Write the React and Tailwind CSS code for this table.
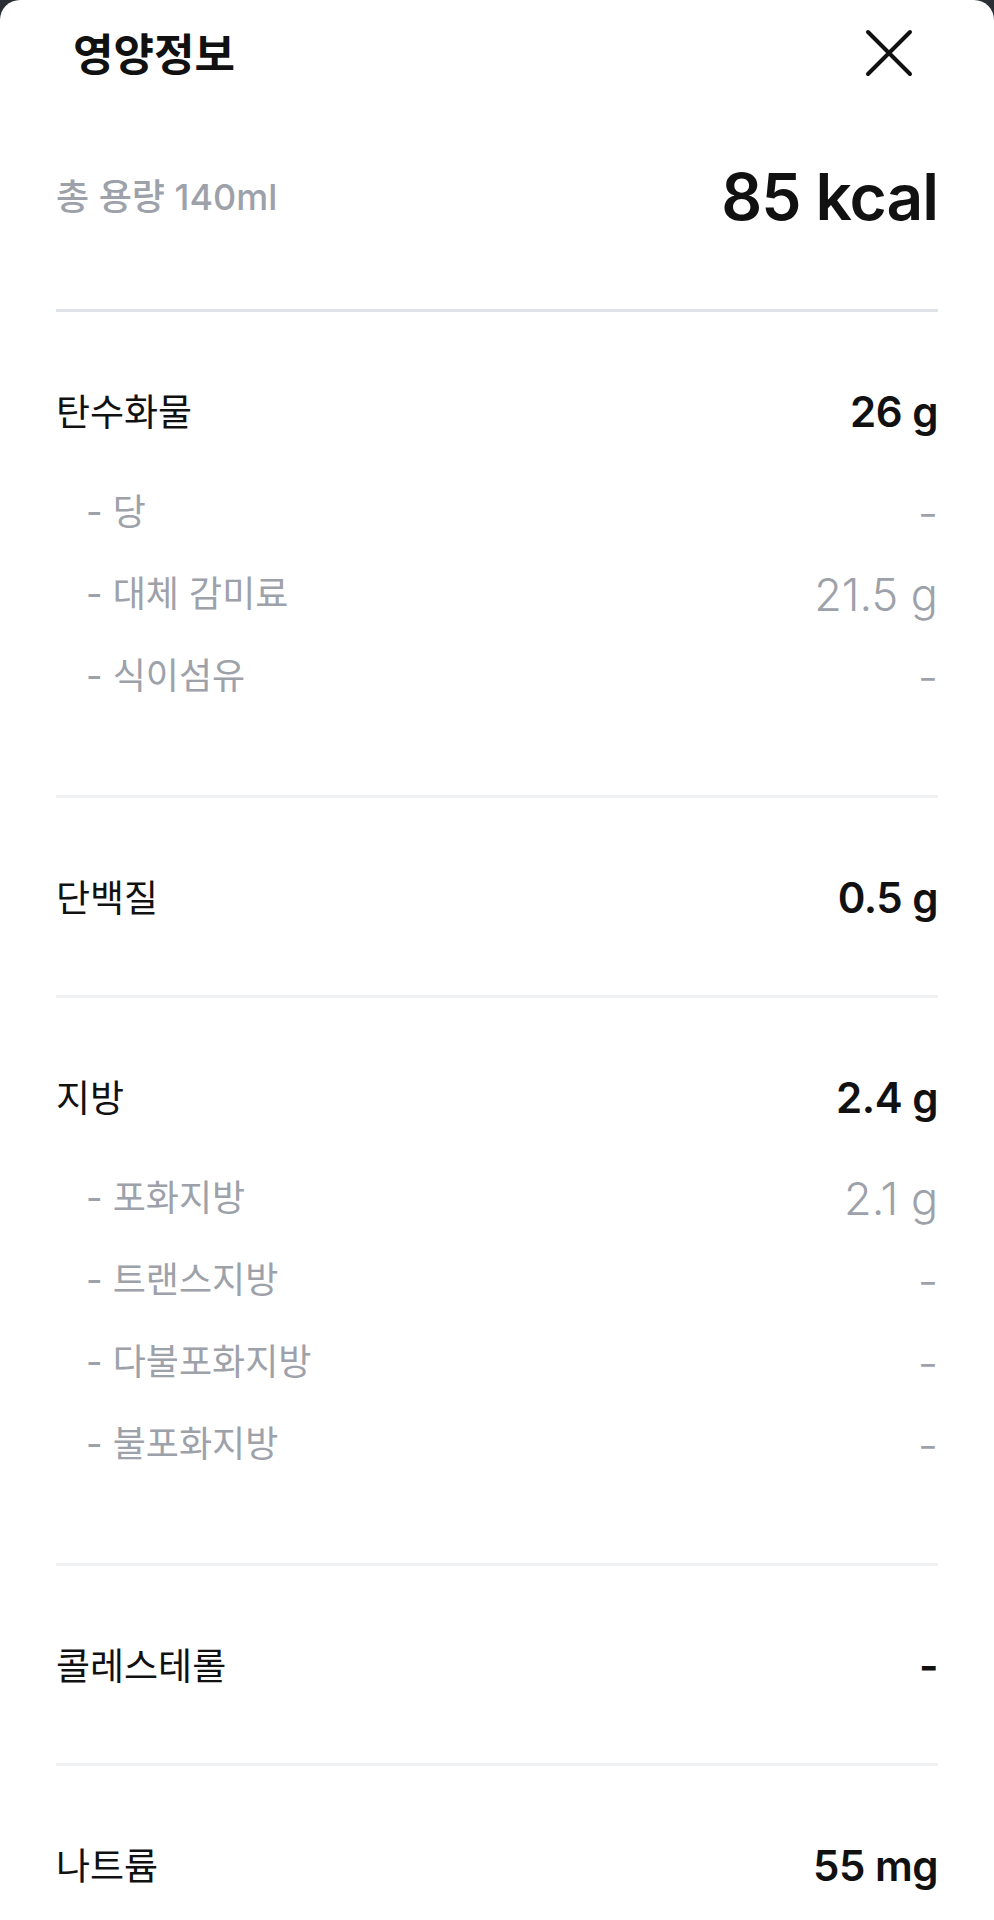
import React from 'react';

const FONT = { fontFamily: 'Inter, "Noto Sans CJK KR", "Noto Sans", sans-serif' };

const sections = [
    {
        label: '탄수화물',
        value: '26 g',
        subs: [
            { label: '당', value: '-' },
            { label: '대체 감미료', value: '21.5 g' },
            { label: '식이섬유', value: '-' },
        ],
    },
    { label: '단백질', value: '0.5 g' },
    {
        label: '지방',
        value: '2.4 g',
        subs: [
            { label: '포화지방', value: '2.1 g' },
            { label: '트랜스지방', value: '-' },
            { label: '다불포화지방', value: '-' },
            { label: '불포화지방', value: '-' },
        ],
    },
    { label: '콜레스테롤', value: '-' },
    { label: '나트륨', value: '55 mg' },
];

function Section({ label, value, subs }) {
    return (
        <div className={`pt-[76px] ${subs ? 'pb-[78px]' : 'pb-[73px]'}`}>
            <div className="flex h-12 items-center justify-between">
                <span className="text-[37px] leading-none text-[#111]">{label}</span>
                <span className="text-[42px] font-semibold leading-none tracking-[-0.5px] text-[#111]">{value}</span>
            </div>
            {subs && (
                <div className="mt-[35px]">
                    {subs.map((s) => (
                        <div key={s.label} className="flex h-[82px] items-center justify-between pl-[30px]">
                            <span className="text-[36px] leading-none text-[#9da1a9]">- {s.label}</span>
                            <span className="text-[45px] font-light leading-none text-[#9da1a9]">{s.value}</span>
                        </div>
                    ))}
                </div>
            )}
        </div>
    );
}

export default function App() {
    return (
        <div className="w-[994px] h-[1920px] overflow-hidden bg-[#2a2e35]" style={FONT}>
            <div className="h-full rounded-t-[20px] bg-white">
                {/* Header */}
                <div className="flex h-14 items-center justify-between pt-[27px] box-content pl-[73px] pr-[81px]">
                    <h1 className="text-[44px] font-bold leading-none text-[#111]">영양정보</h1>
                    <button className="-mt-1">
                        <svg width="48" height="48" viewBox="0 0 48 48" fill="none" stroke="#111" strokeWidth="4" strokeLinecap="round">
                            <path d="M3 3L45 45M45 3L3 45" />
                        </svg>
                    </button>
                </div>

                <div className="px-14">
                    {/* Total */}
                    <div className="mt-[82px] flex h-16 items-center justify-between">
                        <span className="text-[36px] font-medium leading-none text-[#9da1a9]">총 용량 140ml</span>
                        <span className="text-[64px] font-semibold leading-none tracking-[-1px] text-[#111]">85 kcal</span>
                    </div>
                    <div className="mt-[80px] h-[3px] bg-[#dfe2e6]" />

                    {sections.map((sec, i) => (
                        <div key={sec.label}>
                            {i > 0 && <div className="h-[3px] bg-[#f0f1f3]" />}
                            <Section {...sec} />
                        </div>
                    ))}
                </div>
            </div>
        </div>
    );
}
